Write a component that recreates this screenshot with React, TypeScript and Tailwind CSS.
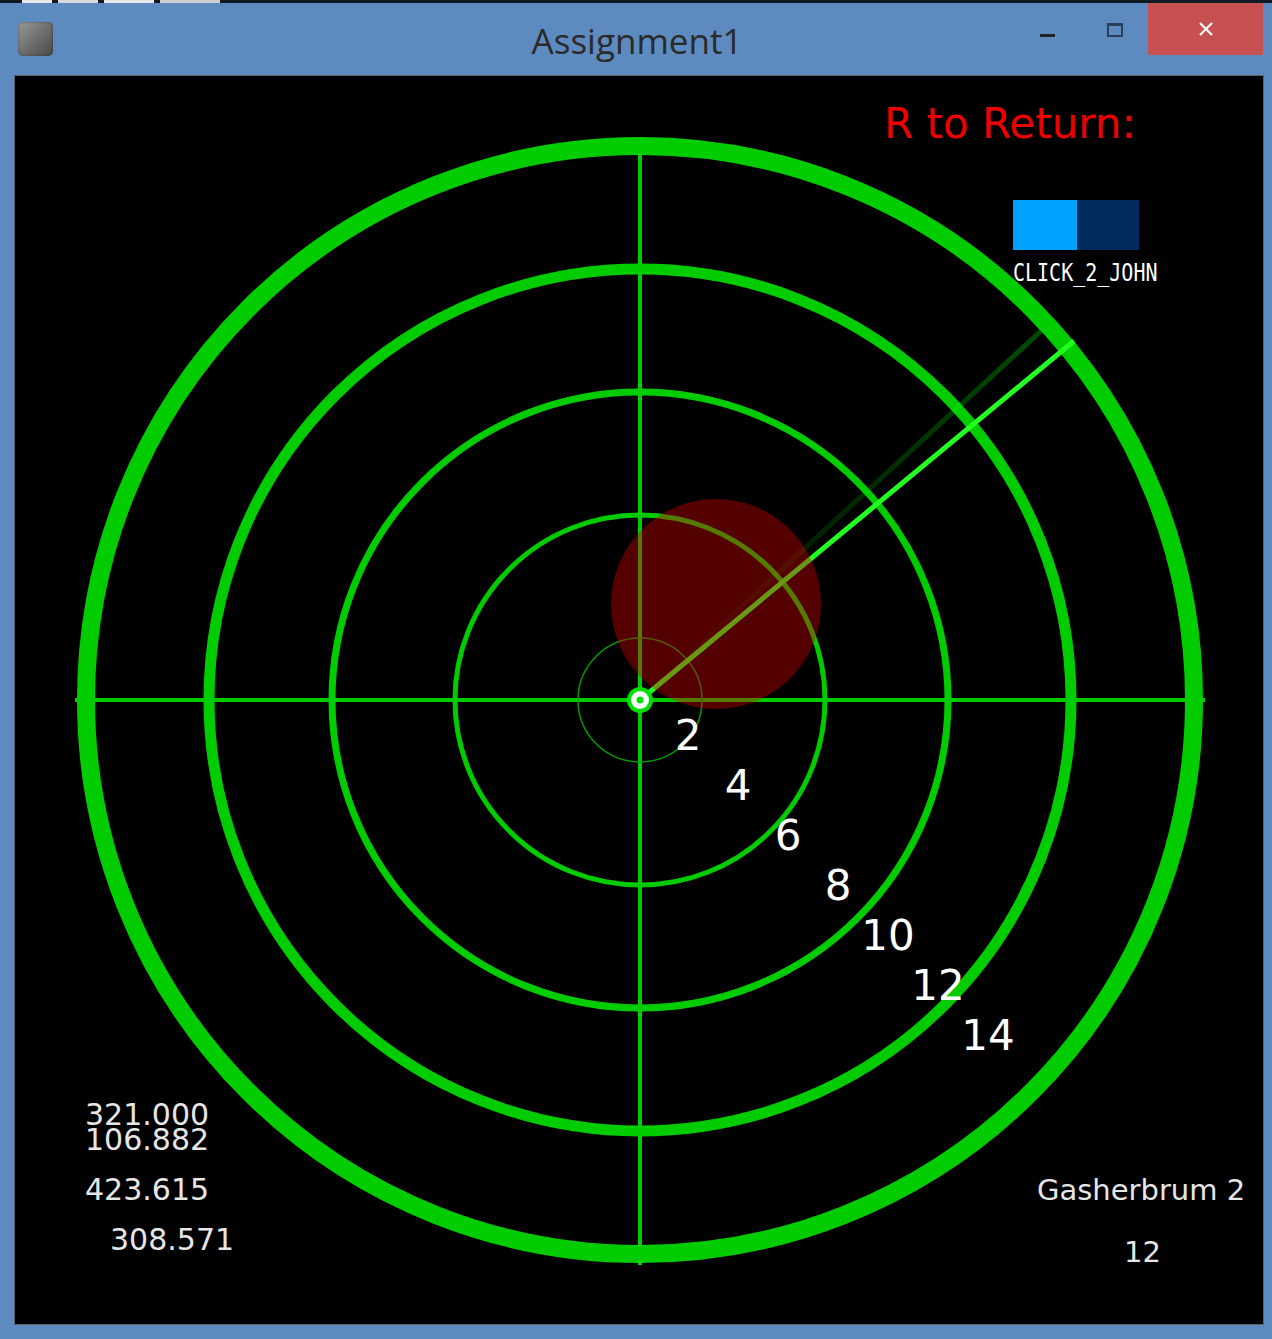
import React from 'react';

const GREEN = '#00cc00';
const CX = 626;
const CY = 625;

// range labels along the diagonal
const rangeLabels = ['2', '4', '6', '8', '10', '12', '14'];

const rings = [
  { r: 185, w: 5 },
  { r: 308, w: 7 },
  { r: 431, w: 11 },
  { r: 554, w: 18 },
];

const readouts = [
  { text: '321.000', x: 71, y: 1050 },
  { text: '106.882', x: 71, y: 1075 },
  { text: '423.615', x: 71, y: 1125 },
  { text: '308.571', x: 96, y: 1175 },
];

const TitleBar: React.FC = () => (
  <div className="h-[72px] grid grid-cols-[1fr_auto_1fr] items-start">
    <div className="pl-[18px] pt-[19px]">
      <div className="w-[35px] h-[34px] rounded-[5px] bg-gradient-to-br from-[#9a9a9a] via-[#6f6f6f] to-[#4a4a4a] shadow-[inset_0_0_3px_rgba(0,0,0,0.4)]" />
    </div>
    <div
      className="pt-[16px] pl-[2px] text-[35px] leading-[44px] text-[#2a2a2a]"
      style={{ fontFamily: '"Open Sans", "Noto Sans", sans-serif' }}
    >
      Assignment1
    </div>
    <div className="flex justify-end pr-[9px]">
      <div className="w-[67px] h-[52px] flex items-start justify-center pt-[31px]">
        <div className="w-[15px] h-[3px] bg-[#222]" />
      </div>
      <div className="w-[67px] h-[52px] flex items-start justify-center pt-[20px]">
        <div className="w-[16px] h-[14px] border-2 border-t-[3px] border-[#2c3e57]" />
      </div>
      <div className="w-[115px] h-[52px] bg-[#c75050] flex items-center justify-center">
        <svg width="16" height="16" viewBox="0 0 16 16">
          <path d="M2 2 L14 14 M14 2 L2 14" stroke="#fff" strokeWidth="2.2" />
        </svg>
      </div>
    </div>
  </div>
);

const Radar: React.FC = () => (
  <svg width="1248" height="1248" viewBox="1 1 1248 1248" className="block">
    <defs>
      <linearGradient id="trail" x1={CX} y1={CY} x2={1027} y2={256} gradientUnits="userSpaceOnUse">
        <stop offset="0" stopColor="#00ff00" stopOpacity="0" />
        <stop offset="1" stopColor="#00ff00" stopOpacity="0.3" />
      </linearGradient>
    </defs>

    {/* crosshair */}
    <line x1={61} y1={CY} x2={1191} y2={CY} stroke={GREEN} strokeWidth="4" />
    <line x1={CX} y1={62} x2={CX} y2={1190} stroke={GREEN} strokeWidth="4" />

    {/* rings */}
    {rings.map((ring) => (
      <circle key={ring.r} cx={CX} cy={CY} r={ring.r} fill="none" stroke={GREEN} strokeWidth={ring.w} />
    ))}
    <circle cx={CX} cy={CY} r={62} fill="none" stroke="#009a00" strokeWidth="1.5" />

    {/* sweep */}
    <line x1={CX} y1={CY} x2={1027} y2={256} stroke="url(#trail)" strokeWidth="5" />
    <line x1={CX} y1={CY} x2={1060} y2={266} stroke="#22ff22" strokeWidth="5" />

    {/* target blip */}
    <circle cx={702} cy={529} r={105} fill="rgba(212,0,0,0.4)" />

    {/* origin */}
    <circle cx={CX} cy={CY} r={13} fill="#00e000" />
    <circle cx={CX} cy={CY} r={9} fill="#ffffff" />
    <circle cx={CX} cy={CY} r={3.5} fill="#00e000" />

    <g style={{ fontFamily: '"DejaVu Sans", "Liberation Sans", sans-serif' }}>
      <text x={870} y={63} fontSize="42" fill="#ee0000">
        R to Return:
      </text>

      {rangeLabels.map((label, i) => (
        <text key={label} x={674 + 50 * i} y={675 + 50 * i} fontSize="42" fill="#ffffff" textAnchor="middle">
          {label}
        </text>
      ))}

      {readouts.map((r) => (
        <text key={r.text} x={r.x} y={r.y} fontSize="30" fill="#e6e6e6">
          {r.text}
        </text>
      ))}

      <text x={1023} y={1125} fontSize="29" fill="#e6e6e6">
        Gasherbrum 2
      </text>
      <text x={1110} y={1187} fontSize="29" fill="#e6e6e6">
        12
      </text>
    </g>
  </svg>
);

const App: React.FC = () => {
  return (
    <div className="w-[1272px] h-[1339px] bg-[#5d8abf] flex flex-col overflow-hidden">
      {/* desktop strip behind the window */}
      <div className="h-[3px] bg-[#0f1a24] flex gap-[6px] pl-[22px]">
        <div className="w-[30px] bg-[#e8e8e8]" />
        <div className="w-[40px] bg-[#d8d8d8]" />
        <div className="w-[50px] bg-[#e8e8e8]" />
        <div className="w-[60px] bg-[#d0d0d0]" />
      </div>

      <TitleBar />

      <div className="pl-[14px]">
        <div className="relative w-[1250px] h-[1250px] bg-black border border-[#566170]">
          <Radar />

          {/* controlP5 toggle */}
          <div className="absolute left-[998px] top-[124px] flex">
            <div className="w-[64px] h-[50px] bg-[#00a2ff]" />
            <div className="w-[62px] h-[50px] bg-[#002b5c]" />
          </div>
          <div
            className="absolute left-[998px] top-[184px] text-[20px] leading-[20px] text-white origin-top scale-y-[1.25]"
            style={{ fontFamily: '"DejaVu Sans Mono", "Liberation Mono", monospace' }}
          >
            CLICK_2_JOHN
          </div>
        </div>
      </div>
    </div>
  );
};

export default App;
